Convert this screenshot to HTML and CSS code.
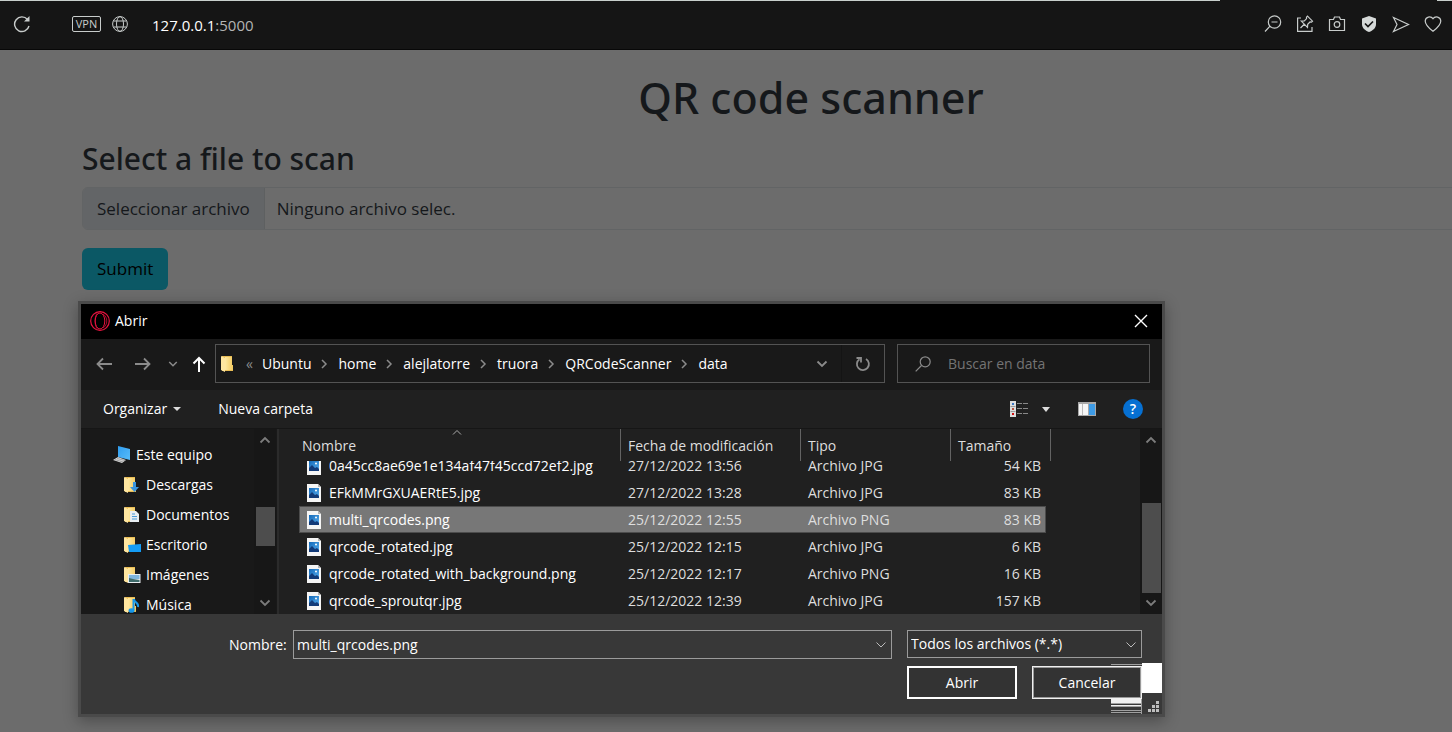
FILE: index.html
```
<!DOCTYPE html>
<html lang="es">
<head>
<meta charset="utf-8">
<title>QR code scanner</title>
<link rel="stylesheet" href="styles.css">
</head>
<body>
<svg class="defs" aria-hidden="true">
  <defs>
    <linearGradient id="gold" x1="0" x2="1"><stop offset="0" stop-color="#ffe9a2"/><stop offset="1" stop-color="#f3c95e"/></linearGradient>
    <linearGradient id="sky" x1="0" y1="0" x2="1" y2="1"><stop offset="0" stop-color="#1268b8"/><stop offset="1" stop-color="#5ab0f0"/></linearGradient>
    <linearGradient id="screen" x1="0" y1="0" x2="1" y2="1"><stop offset="0" stop-color="#2f9df0"/><stop offset="1" stop-color="#59bdfa"/></linearGradient>
    <symbol id="folder" viewBox="0 0 18 18">
      <path d="M2 1h10v9h1v6H2z" fill="#e9bd55"/><path d="M5 2h7v8h1v5H5z" fill="url(#gold)"/><path d="M1 1l4 2v14l-4-2z" fill="#ffe6a0"/>
    </symbol>
    <symbol id="picture" viewBox="0 0 14 18">
      <path d="M0 0h11l3 3v15H0z" fill="#f5f5f5"/><path d="M11 0v3h3z" fill="#b5b5b5"/>
      <path d="M2 4h10v10H2z" fill="url(#sky)"/><path d="M2 14v-3l3-3 3 3 2-1 2 2v2z" fill="#123a78"/><circle cx="9" cy="6.500" r="1" fill="#fff"/>
    </symbol>
    <symbol id="up" viewBox="0 0 12 8"><path d="M1.500 6.500 6 2l4.500 4.500" fill="none" stroke="currentColor" stroke-width="1.800"/></symbol>
    <symbol id="down" viewBox="0 0 12 8"><path d="M1.500 1.500 6 6l4.500-4.500" fill="none" stroke="currentColor" stroke-width="1.800"/></symbol>
    <symbol id="thin" viewBox="0 0 12 8"><path d="M1.500 1.500 6 6l4.500-4.500" fill="none" stroke="currentColor" stroke-width="1"/></symbol>
    <symbol id="right" viewBox="0 0 8 10"><path d="M2 1l4 4-4 4" fill="none" stroke="currentColor" stroke-width="1.500"/></symbol>
  </defs>
</svg>

<header class="browser">
  <div class="tabline"><i></i><b></b></div>
  <button class="ico reload" aria-label="Recargar"><svg width="18" height="18" viewBox="0 0 18 18"><path d="M14.500 4.500A7.300 7.300 0 1 0 16 11" fill="none" stroke="currentColor" stroke-width="1.400"/><path d="M16.500 1v5.500H11z" fill="currentColor"/></svg></button>
  <button class="vpn">VPN</button>
  <button class="ico" aria-label="Sitio"><svg width="16" height="16" viewBox="0 0 16 16" fill="none" stroke="currentColor"><circle cx="8" cy="8" r="7.400"/><ellipse cx="8" cy="8" rx="3.500" ry="7.400"/><path d="M1.500 5h13M1.500 11h13"/></svg></button>
  <div class="url">127.0.0.1<span>:5000</span></div>
  <nav class="tools">
    <button class="ico" aria-label="Zoom"><svg width="18" height="18" viewBox="0 0 18 18" fill="none" stroke="currentColor" stroke-width="1.200"><circle cx="10.500" cy="7" r="6.200"/><path d="M7.500 7h6M6 11.200 1 16.500"/></svg></button>
    <button class="ico" aria-label="Fijar"><svg width="18" height="18" viewBox="0 0 18 18" fill="none" stroke="currentColor" stroke-width="1.200"><path d="M5 3H1.600v13.400H16V12M4.500 13l4-4M11.500 1.200l5 5-1 1-1.500-.2-2.300 2.300-.2 3-6.200-6.200 3-.2 2.300-2.300-.1-1.400z"/></svg></button>
    <button class="ico" aria-label="Captura"><svg width="18" height="18" viewBox="0 0 18 18" fill="none" stroke="currentColor" stroke-width="1.200"><path d="M1.500 4.500h4l1-2.500h5l1 2.500h4v11h-15z"/><circle cx="9" cy="9.500" r="2.800"/></svg></button>
    <button class="ico" aria-label="Protección"><svg width="18" height="18" viewBox="0 0 18 18"><path d="M9 1l7 2.500V9c0 4-3 6.500-7 8-4-1.500-7-4-7-8V3.500z" fill="#d5d9d8"/><path d="M5 8.500l3 3 5-5" fill="none" stroke="#151515" stroke-width="1.700"/></svg></button>
    <button class="ico" aria-label="Enviar"><svg width="18" height="18" viewBox="0 0 18 18" fill="none" stroke="currentColor" stroke-width="1.200"><path d="M1.500 2.500 16.500 9.500l-15 7L5 9.500z"/></svg></button>
    <button class="ico" aria-label="Favorito"><svg width="18" height="18" viewBox="0 0 18 18" fill="none" stroke="currentColor" stroke-width="1.200"><path d="M9 16.300C4 12.500 1.200 9.500 1.200 6a4.300 4.300 0 0 1 7.800-2.300A4.300 4.300 0 0 1 16.800 6c0 3.500-2.800 6.500-7.800 10.300z"/></svg></button>
  </nav>
</header>

<main class="page">
  <h1>QR code scanner</h1>
  <form class="scan">
    <h2>Select a file to scan</h2>
    <label class="file"><input type="file"><span class="pick">Seleccionar archivo</span><span class="none">Ninguno archivo selec.</span></label>
    <button type="button" class="submit">Submit</button>
  </form>
</main>

<section class="dialog" role="dialog" aria-label="Abrir">
  <div class="title">
    <svg width="20" height="20" viewBox="0 0 20 20" fill="none" stroke="#e8133f"><circle cx="10" cy="10" r="9.300" stroke-width="1.200"/><ellipse cx="10" cy="10" rx="4.800" ry="8"/><path d="M8 1.500C4 4 4 16 8 18.500M13 3c5 3 5 11 0 14" stroke-width=".7"/></svg>
    <span>Abrir</span>
    <button class="ico close" aria-label="Cerrar"><svg width="14" height="14" viewBox="0 0 14 14" stroke="#fff" stroke-width="1.400"><path d="M1 1l12 12M13 1 1 13"/></svg></button>
  </div>
  <div class="nav">
    <div class="arrows">
      <button class="ico" aria-label="Atrás"><svg width="16" height="14" viewBox="0 0 16 14" fill="none" stroke="currentColor" stroke-width="1.800"><path d="M16 7H1.500M7 1.500 1.500 7 7 12.500"/></svg></button>
      <button class="ico" aria-label="Adelante"><svg width="16" height="14" viewBox="0 0 16 14" fill="none" stroke="currentColor" stroke-width="1.800"><path d="M0 7h14.500M9 1.500 14.500 7 9 12.500"/></svg></button>
      <button class="ico recent" aria-label="Recientes"><svg width="10" height="8"><use href="#down"/></svg></button>
      <button class="ico upbtn" aria-label="Subir"><svg width="14" height="16" viewBox="0 0 14 16" fill="none" stroke="#fff" stroke-width="2"><path d="M7 16V2M1.500 7.500 7 2l5.500 5.500"/></svg></button>
    </div>
    <div class="path">
      <svg width="18" height="18"><use href="#folder"/></svg>
      <span class="more">«</span>
      <a href="#">Ubuntu</a><svg width="8" height="10"><use href="#right"/></svg>
      <a href="#">home</a><svg width="8" height="10"><use href="#right"/></svg>
      <a href="#">alejlatorre</a><svg width="8" height="10"><use href="#right"/></svg>
      <a href="#">truora</a><svg width="8" height="10"><use href="#right"/></svg>
      <a href="#">QRCodeScanner</a><svg width="8" height="10"><use href="#right"/></svg>
      <a href="#">data</a>
      <button class="ico drop" aria-label="Ubicaciones"><svg width="12" height="8"><use href="#down"/></svg></button>
      <button class="ico refresh" aria-label="Actualizar"><svg width="16" height="16" viewBox="0 0 16 16" fill="none" stroke="currentColor" stroke-width="1.800"><path d="M11 3a6 6 0 1 1-6.500.2M1.500 2H6v4.500"/></svg></button>
    </div>
    <label class="search"><svg width="16" height="16" viewBox="0 0 16 16" fill="none" stroke="#8a8a8a" stroke-width="1.200"><circle cx="10.200" cy="5.800" r="5"/><path d="M6.500 9.500.7 15.300"/></svg><input type="search" placeholder="Buscar en data" aria-label="Buscar en data"></label>
  </div>
  <div class="toolbar">
    <button>Organizar<svg width="8" height="4"><path d="M0 0h8L4 4z" fill="#ddd"/></svg></button>
    <button>Nueva carpeta</button>
    <div class="views">
      <button class="ico view" aria-label="Vista"><svg width="18" height="16" viewBox="0 0 18 16"><path d="M0 0h6v16H0z" fill="#ddd"/><path d="M.5 5.500h5M.5 10.500h5" stroke="#999"/><path d="M2 2h2v2H2z" fill="#3b78c4"/><path d="M2 7h2v2H2z" fill="#b4523c"/><path d="M2 12h2v2H2z" fill="#d01010"/><path d="M7 2.500h5M13 2.500h5M7 7.500h5M13 7.500h5M7 12.500h5M13 12.500h5" stroke="#888"/></svg></button>
      <button class="ico" aria-label="Más vistas"><svg width="8" height="5"><path d="M0 0h8L4 5z" fill="#ddd"/></svg></button>
      <button class="ico pane" aria-label="Panel"><svg width="18" height="14" viewBox="0 0 18 14"><path d="M0 0h18v14H0z" fill="#a8a8a8"/><path d="M1 2h9v11H1z" fill="#f6f6f6"/><path d="M4.500 2v11" stroke="#bbb"/><path d="M11 2h6v11h-6z" fill="#3d9be6"/></svg></button>
      <button class="help" aria-label="Ayuda">?</button>
    </div>
  </div>
  <div class="content">
    <ul class="tree">
      <li class="root"><svg width="18" height="18" viewBox="0 0 18 18"><path d="M5 0l12 3v11L5 11z" fill="url(#screen)"/><path d="M0 14l5-3 8 3-4 3z" fill="#d8d8d8"/><path d="M2 13.500l8 2.500M4 12.500l8 2" stroke="#888" stroke-width=".7"/></svg>Este equipo</li>
      <li><svg width="18" height="18" viewBox="0 0 18 18"><use href="#folder"/><path d="M10 6h3v5h3l-4.500 5L7 11h3z" fill="#3a94dd"/></svg>Descargas</li>
      <li><svg width="18" height="18" viewBox="0 0 18 18"><use href="#folder"/><path d="M7 5h6l3 3v8H7z" fill="#e8eef2"/><path d="M9 8h3M9 10.500h5M9 13h5" stroke="#4a9bd8"/></svg>Documentos</li>
      <li><svg width="18" height="18" viewBox="0 0 18 18"><use href="#folder"/><path d="M5 9l13-1v8H6z" fill="#149cf5"/></svg>Escritorio</li>
      <li><svg width="18" height="18" viewBox="0 0 18 18"><use href="#folder"/><path d="M5 8h12.500v9H5z" fill="#e8edf0"/><path d="M6 9h10.500v4H6z" fill="#7fb5dd"/><path d="M6 12l4 1 6.500 1v2H6z" fill="#3e6b6a"/></svg>Imágenes</li>
      <li><svg width="18" height="18" viewBox="0 0 18 18"><use href="#folder"/><path d="M10.500 3v11M11 3c0 4 5 3 4 8" fill="none" stroke="#1697ea" stroke-width="2"/><ellipse cx="8.500" cy="14.500" rx="3" ry="2.300" fill="#1697ea"/></svg>Música</li>
    </ul>
    <div class="bar side"><svg width="12" height="8"><use href="#up"/></svg><i></i><svg width="12" height="8"><use href="#down"/></svg></div>
    <table class="files">
      <thead><tr><th>Nombre<svg width="10" height="6" viewBox="0 0 10 6"><path d="M1 5.500 5 1.500l4 4" fill="none" stroke="#aaa"/></svg></th><th>Fecha de modificación</th><th>Tipo</th><th>Tamaño</th></tr></thead>
      <tbody>
        <tr><td><svg width="14" height="18"><use href="#picture"/></svg>0a45cc8ae69e1e134af47f45ccd72ef2.jpg</td><td>27/12/2022 13:56</td><td>Archivo JPG</td><td>54 KB</td></tr>
        <tr><td><svg width="14" height="18"><use href="#picture"/></svg>EFkMMrGXUAERtE5.jpg</td><td>27/12/2022 13:28</td><td>Archivo JPG</td><td>83 KB</td></tr>
        <tr class="on"><td><svg width="14" height="18"><use href="#picture"/></svg>multi_qrcodes.png</td><td>25/12/2022 12:55</td><td>Archivo PNG</td><td>83 KB</td></tr>
        <tr><td><svg width="14" height="18"><use href="#picture"/></svg>qrcode_rotated.jpg</td><td>25/12/2022 12:15</td><td>Archivo JPG</td><td>6 KB</td></tr>
        <tr><td><svg width="14" height="18"><use href="#picture"/></svg>qrcode_rotated_with_background.png</td><td>25/12/2022 12:17</td><td>Archivo PNG</td><td>16 KB</td></tr>
        <tr><td><svg width="14" height="18"><use href="#picture"/></svg>qrcode_sproutqr.jpg</td><td>25/12/2022 12:39</td><td>Archivo JPG</td><td>157 KB</td></tr>
      </tbody>
    </table>
    <div class="bar main"><svg width="12" height="8"><use href="#up"/></svg><i></i><svg width="12" height="8"><use href="#down"/></svg></div>
  </div>
  <footer class="foot">
    <svg class="corner" width="51" height="51" viewBox="0 0 51 51"><path d="M31 0h20v30H31z" fill="#fff"/><path d="M0 1.500h31M0 40.500h31M0 43.500h31M0 47.500h31M0 49.500h31M30.500 36v15" stroke="#a0a0a0"/><path d="M0 36h30v4H0zM0 42h30v1H0z" fill="#f0f0f0"/><path d="M45 38h3v3h-3zM41 42h3v3h-3zM45 42h3v3h-3zM37 46h3v3h-3zM41 46h3v3h-3zM45 46h3v3h-3z" fill="#bfbfbf"/></svg>
    <div class="fields">
      <label for="name">Nombre:</label>
      <div class="combo name"><input id="name" type="text" value="multi_qrcodes.png"><svg width="12" height="8"><use href="#thin"/></svg></div>
      <div class="combo type"><select aria-label="Tipo de archivo"><option>Todos los archivos (*.*)</option></select><svg width="12" height="8"><use href="#thin"/></svg></div>
    </div>
    <div class="actions"><button class="ok">Abrir</button><button class="cancel">Cancelar</button></div>
  </footer>
</section>
</body>
</html>
```
FILE: styles.css
```
* { box-sizing: border-box; }
body {
  margin: 0;
  min-height: 100vh;
  position: relative;
  overflow: hidden;
  background: #6c6c6c;
  color: #fff;
  font: 14px/20px "Open Sans", "Noto Sans", sans-serif;
}
button, input, select { font: inherit; color: inherit; background: none; border: 0; padding: 0; margin: 0; outline: 0; }
svg { display: block; flex: none; }
.defs { position: absolute; width: 0; height: 0; }
.ico { display: flex; align-items: center; justify-content: center; color: inherit; }

.browser {
  height: 50px;
  position: relative;
  display: flex;
  align-items: center;
  padding: 0 10px 2px 13px;
  background: #151515;
  border-bottom: 1px solid #080808;
  color: #c8cccb;
}
.tabline { position: absolute; top: 0; left: 0; right: 0; display: flex; justify-content: space-between; }
.tabline i { height: 1px; width: 84%; background: #c8cfcc; }
.tabline b { height: 1px; width: 1%; background: #c8cfcc; }
.reload { margin-right: 41px; }
.vpn { width: 29px; height: 16px; margin-right: 11px; border: 1px solid #c8cccb; border-radius: 2px; font: 11px/14px "Open Sans", sans-serif; }
.url { margin-left: 24px; font-size: 15px; color: #fff; padding-top: 3px; }
.url span { color: #b4b4b4; }
.tools { margin-left: auto; display: flex; gap: 14px; }

.page { padding: 21px 0 0 82px; margin-right: -88px; color: #15181b; }
h1 { margin: 0 0 12px; font: 500 43px/54px "Noto Sans", "Open Sans", sans-serif; text-align: center; }
h2 { margin: 0 0 6px; font: 500 30px/44px "Noto Sans", "Open Sans", sans-serif; }
.scan { font-size: 17px; }
.file { display: flex; height: 43px; border: 1px solid #626465; border-radius: 6px; overflow: hidden; line-height: 41px; }
.file input { position: absolute; opacity: 0; width: 1px; height: 1px; }
.pick { background: #636567; padding: 0 14px; border-right: 1px solid #5e6061; }
.none { padding: 0 12px; }
.submit { margin-top: 18px; height: 42px; padding: 0 15px; border-radius: 6px; background: #0b5865; color: #000; }

.dialog {
  position: absolute;
  top: 301px;
  left: 78px;
  right: 287px;
  border: 3px solid #4a4a4a;
  background: #202020;
  box-shadow: 0 4px 14px rgba(0, 0, 0, .3);
}
.title { height: 35px; display: flex; align-items: center; gap: 5px; padding: 0 14px 2px 9px; background: #000; }
.close { margin-left: auto; }
.nav { height: 51px; display: flex; align-items: center; padding: 0 12px 2px 15px; background: #191919; }
.arrows { display: flex; align-items: center; gap: 23px; width: 119px; color: #8b8b8b; }
.recent { margin-left: -6px; }
.upbtn { margin-left: -9px; }
.path { flex: 1; height: 39px; display: flex; align-items: center; border: 1px solid #535353; padding-left: 4px; color: #8b8b8b; }
.path a { color: #fff; text-decoration: none; margin: 0 9px 0 10px; }
.more { margin-left: 8px; }
.path .more + a { margin-left: 9px; }
.drop { margin-left: auto; width: 40px; height: 37px; border-right: 1px solid #141414; }
.refresh { width: 42px; }
.search { width: 253px; height: 39px; margin-left: 12px; border: 1px solid #535353; display: flex; align-items: center; gap: 17px; padding-left: 17px; }
.search input { min-width: 0; flex: 1; }
.search input::placeholder { color: #747474; opacity: 1; }
.toolbar { height: 39px; display: flex; align-items: center; gap: 37px; padding: 0 19px 0 22px; border-bottom: 1px solid #161616; }
.toolbar button { display: flex; align-items: center; gap: 6px; }
.views { margin-left: auto; display: flex; align-items: center; }
.view { margin-right: 14px; }
.pane { margin: 0 27px 0 28px; }
.toolbar .help { width: 20px; height: 20px; border-radius: 50%; background: #0670d2; justify-content: center; font-weight: 600; }

.content { height: 185px; display: flex; overflow: hidden; }
.tree { width: 173px; margin: 0; padding: 11px 0 0; list-style: none; background: #191919; }
.tree li { display: flex; align-items: center; gap: 5px; height: 30px; padding-left: 42px; }
.tree .root { padding-left: 32px; }
.bar { width: 22px; display: flex; flex-direction: column; align-items: center; background: #171717; color: #7c7c7c; padding: 7px 1px; }
.bar i { width: 19px; background: #4d4d4d; }
.bar svg:last-child { margin-top: auto; }
.side { width: 23px; border-right: 1px solid #191919; }
.side i { height: 39px; margin-top: 63px; }
.main i { height: 90px; margin-top: 59px; }
.files { flex: 1; display: flex; flex-direction: column; border-left: 2px solid #2b2b2b; padding-left: 20px; border-spacing: 0; }
.files tr { display: grid; grid-template-columns: 322px 180px 150px 100px; }
.files th { position: relative; height: 32px; padding: 0 0 0 7px; text-align: left; font-weight: 400; line-height: 33px; color: #dedede; border-right: 1px solid #636363; }
.files th:first-child { padding-left: 3px; }
.files th svg { position: absolute; top: 0; left: 153px; }
.files tbody { height: 153px; display: flex; flex-direction: column; justify-content: flex-end; overflow: hidden; }
.files tbody tr { height: 27px; flex: none; width: 747px; grid-template-columns: 322px 180px 150px 95px; }
.files td { display: flex; align-items: center; padding: 0 0 0 7px; color: #dedede; white-space: nowrap; }
.files td:first-child { padding-left: 8px; gap: 8px; color: #fff; }
.files td:last-child { justify-content: flex-end; padding-right: 5px; }
.files .on { background: #777; box-shadow: inset 0 0 0 1px #4c4c4c; }

.foot { position: relative; padding: 16px 20px 15px 148px; background: #383838; }
.fields { display: flex; align-items: flex-start; }
.fields label { width: 64px; line-height: 29px; }
.combo { position: relative; border: 1px solid #9b9b9b; background: #333; height: 28px; }
.combo input, .combo select { width: 100%; height: 100%; padding-left: 3px; appearance: none; }
.combo svg { position: absolute; right: 4px; top: 10px; color: #bbb; pointer-events: none; }
.name { flex: 1; height: 29px; background: #383838; }
.type { width: 235px; margin-left: 15px; }
.actions { display: flex; justify-content: flex-end; gap: 15px; margin-top: 7px; position: relative; }
.actions button { width: 110px; height: 33px; background: #333; }
.actions .ok { border: 2px solid #fff; }
.actions .cancel { border: 1px solid #f0f0f0; box-shadow: inset 0 0 0 1px #999; }
.corner { position: absolute; right: 0; bottom: 0; }
```
